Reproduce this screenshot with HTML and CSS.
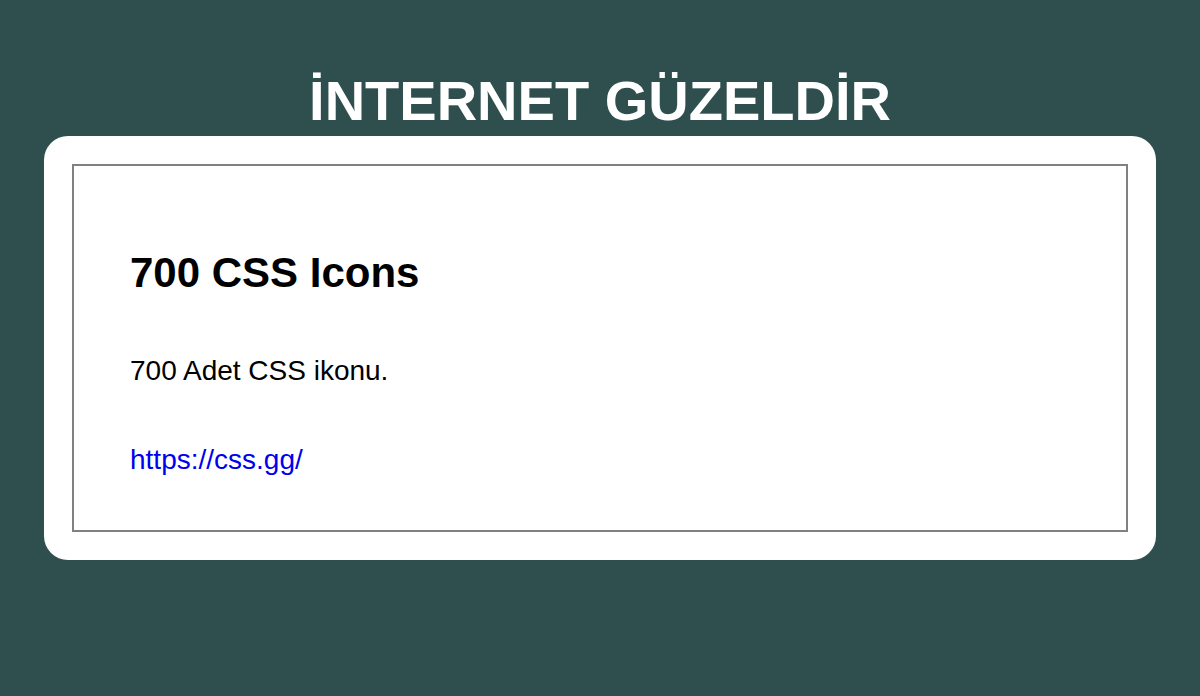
FILE: index.html
```html
<!DOCTYPE html>
<html lang="tr">
<head>
<meta charset="utf-8">
<title>İnternet Güzeldir</title>
<link rel="stylesheet" href="styles.css">
</head>
<body>
<main class="page">
  <h1 class="title">İNTERNET GÜZELDİR</h1>
  <section class="card">
    <div class="item">
      <h2 class="item-title">700 CSS Icons</h2>
      <p class="item-desc">700 Adet CSS ikonu.</p>
      <p class="item-link"><a href="https://css.gg/">https://css.gg/</a></p>
    </div>
  </section>
</main>
</body>
</html>
```
FILE: styles.css
```css
html, body {
  margin: 0;
  padding: 0;
}
body {
  background: #2f4f4f;
  font-family: "Liberation Sans", Arial, sans-serif;
  color: #000;
}
.page {
  padding: 69px 44px 0;
}
.title {
  margin: 0 0 3px;
  font-size: 56px;
  line-height: 64px;
  font-weight: bold;
  color: #fff;
  text-align: center;
}
.card {
  background: #fff;
  border-radius: 24px;
  padding: 28px;
}
.item {
  border: 2px solid #808080;
  padding: 83px 56px 54px;
}
.item-title {
  margin: 0;
  font-size: 42px;
  line-height: 48px;
  font-weight: bold;
}
.item-desc {
  margin: 58px 0 0;
  font-size: 28px;
  line-height: 32px;
}
.item-link {
  margin: 57px 0 0;
  font-size: 28px;
  line-height: 32px;
}
.item-link a {
  color: #0000ee;
  text-decoration: none;
}
```
